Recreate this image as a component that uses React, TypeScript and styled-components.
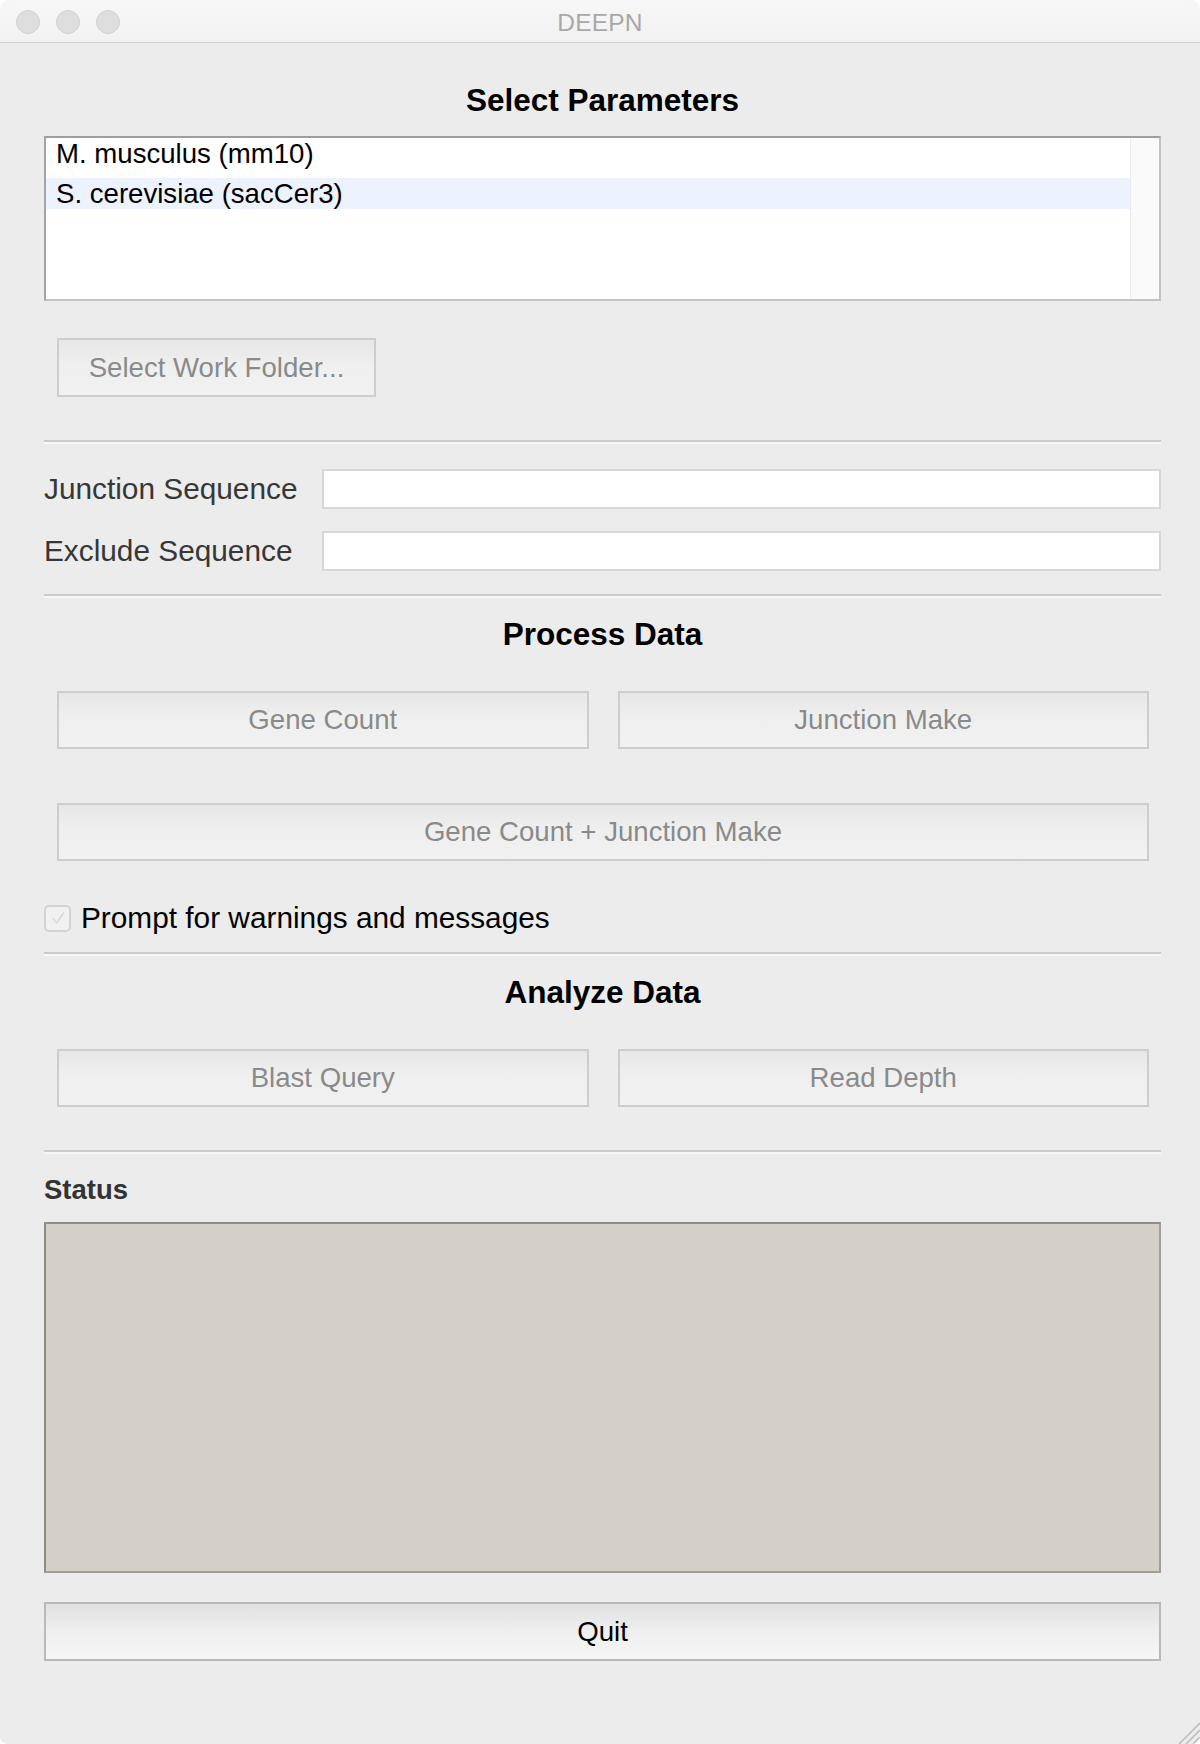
import React from "react";
import styled, { createGlobalStyle } from "styled-components";

const GlobalStyle = createGlobalStyle`
  html, body {
    margin: 0;
    padding: 0;
    background: #ffffff;
  }
  body {
    font-family: "Liberation Sans", Arial, Helvetica, sans-serif;
  }
  * {
    box-sizing: border-box;
  }
`;

const genomes = ["M. musculus (mm10)", "S. cerevisiae (sacCer3)"];

export default function App() {
  return (
    <>
      <GlobalStyle />
      <Window>
        <TitleBar>
          <Lights>
            <Light />
            <Light />
            <Light />
          </Lights>
          <WindowTitle>DEEPN</WindowTitle>
          <span />
        </TitleBar>

        <Content>
          <Heading $top={39}>Select Parameters</Heading>
          <ListBox>
            <ListItems>
              {genomes.map((g, idx) => (
                <ListItem key={g} $selected={idx === 1}>
                  {g}
                </ListItem>
              ))}
            </ListItems>
            <ScrollTrack />
          </ListBox>

          <FolderRow>
            <MacButton $width={319}>Select Work Folder...</MacButton>
          </FolderRow>

          <Separator $top={43} />

          <FieldRow $top={25}>
            <FieldLabel>Junction Sequence</FieldLabel>
            <TextInput />
          </FieldRow>
          <FieldRow $top={22}>
            <FieldLabel>Exclude Sequence</FieldLabel>
            <TextInput />
          </FieldRow>

          <Separator $top={23} />

          <Heading $top={18}>Process Data</Heading>
          <ButtonRow $top={39}>
            <MacButton>Gene Count</MacButton>
            <MacButton>Junction Make</MacButton>
          </ButtonRow>
          <ButtonRow $top={54}>
            <MacButton>Gene Count + Junction Make</MacButton>
          </ButtonRow>

          <CheckRow>
            <CheckBox>
              <svg width="22" height="22" viewBox="0 0 22 22">
                <path
                  d="M6 11.5 L9.5 16 L16.5 6"
                  fill="none"
                  stroke="#d9d9d9"
                  strokeWidth="1.6"
                  strokeLinecap="round"
                  strokeLinejoin="round"
                />
              </svg>
            </CheckBox>
            <CheckLabel>Prompt for warnings and messages</CheckLabel>
          </CheckRow>

          <Separator $top={17} />

          <Heading $top={18}>Analyze Data</Heading>
          <ButtonRow $top={39}>
            <MacButton>Blast Query</MacButton>
            <MacButton>Read Depth</MacButton>
          </ButtonRow>

          <Separator $top={43} />

          <StatusLabel>Status</StatusLabel>
          <StatusBox />

          <QuitButton>Quit</QuitButton>
        </Content>

        <ResizeGrip width="24" height="24" viewBox="0 0 24 24">
          <line x1="24" y1="3" x2="3" y2="24" stroke="#bdbdbd" strokeWidth="1.6" />
          <line x1="24" y1="10" x2="10" y2="24" stroke="#bdbdbd" strokeWidth="1.6" />
          <line x1="24" y1="17" x2="17" y2="24" stroke="#bdbdbd" strokeWidth="1.6" />
        </ResizeGrip>
      </Window>
    </>
  );
}

const Window = styled.div`
  position: relative;
  width: 1200px;
  height: 1744px;
  background: #ececec;
  border-radius: 10px 10px 8px 8px;
  overflow: hidden;
  display: flex;
  flex-direction: column;
`;

const TitleBar = styled.div`
  flex: none;
  height: 43px;
  display: grid;
  grid-template-columns: 1fr auto 1fr;
  align-items: center;
  padding: 2px 16px 0;
  background: linear-gradient(#f7f7f7, #f2f2f2);
  border-bottom: 1px solid #d0d0d0;
`;

const Lights = styled.div`
  display: flex;
  gap: 16px;
`;

const Light = styled.div`
  width: 24px;
  height: 24px;
  border-radius: 50%;
  background: #dedede;
  border: 1px solid #d0d0d0;
`;

const WindowTitle = styled.div`
  font-size: 24.5px;
  color: #a8a8a8;
  letter-spacing: 0.2px;
  padding-top: 2px;
`;

const Content = styled.div`
  display: flex;
  flex-direction: column;
  padding: 0 39px 0 44px;
`;

const Heading = styled.div<{ $top: number }>`
  margin-top: ${(p) => p.$top}px;
  height: 36px;
  line-height: 36px;
  text-align: center;
  font-size: 31.5px;
  font-weight: bold;
  color: #000;
`;

const ListBox = styled.div`
  margin-top: 18px;
  height: 165px;
  display: flex;
  background: #fff;
  border: 2px solid;
  border-color: #9e9e9e #c2c2c2 #c2c2c2 #a4a4a4;
`;

const ListItems = styled.div`
  flex: 1;
  display: flex;
  flex-direction: column;
  gap: 9px;
`;

const ListItem = styled.div<{ $selected: boolean }>`
  height: 31px;
  line-height: 31px;
  padding-left: 10px;
  font-size: 27.6px;
  color: #000;
  background: ${(p) => (p.$selected ? "#ecf3fe" : "transparent")};
`;

const ScrollTrack = styled.div`
  width: 29px;
  background: #fafafa;
  border-left: 1px solid #ebebeb;
`;

const FolderRow = styled.div`
  margin-top: 37px;
  display: flex;
  padding-left: 13px;
`;

const MacButton = styled.div<{ $width?: number }>`
  ${(p) => (p.$width ? `width: ${p.$width}px;` : "flex: 1;")}
  height: 59px;
  display: flex;
  align-items: center;
  justify-content: center;
  font-size: 27.6px;
  color: #8a8a8a;
  background: linear-gradient(#e7e7e7, #efefef 45%, #f1f1f1);
  border: 2px solid #cdcdcd;
`;

const Separator = styled.div<{ $top: number }>`
  margin-top: ${(p) => p.$top}px;
  height: 4px;
  border-top: 2px solid #cbcbcb;
  border-bottom: 2px solid #f6f6f6;
`;

const FieldRow = styled.div<{ $top: number }>`
  margin-top: ${(p) => p.$top}px;
  display: grid;
  grid-template-columns: 278px 1fr;
  align-items: center;
  height: 40px;
`;

const FieldLabel = styled.div`
  font-size: 29.8px;
  color: #373737;
  white-space: nowrap;
`;

const TextInput = styled.div`
  height: 40px;
  background: #fff;
  border: 2px solid #d7d7d7;
`;

const ButtonRow = styled.div<{ $top: number }>`
  margin-top: ${(p) => p.$top}px;
  display: flex;
  gap: 29px;
  padding: 0 12px 0 13px;
  height: 58px;

  & > div {
    height: 58px;
  }
`;

const CheckRow = styled.div`
  margin-top: 40px;
  height: 34px;
  display: flex;
  align-items: center;
  gap: 10px;
`;

const CheckBox = styled.div`
  width: 27px;
  height: 27px;
  display: flex;
  align-items: center;
  justify-content: center;
  border: 2px solid #d2d2d2;
  border-radius: 5px;
  background: #f1f1f1;
`;

const CheckLabel = styled.div`
  font-size: 29.8px;
  color: #000;
`;

const StatusLabel = styled.div`
  margin-top: 20px;
  height: 32px;
  line-height: 32px;
  font-size: 27.5px;
  font-weight: bold;
  color: #333;
`;

const StatusBox = styled.div`
  margin-top: 16px;
  height: 351px;
  background: #d4d0c8;
  border: 2px solid;
  border-color: #8e8d89 #a19f99 #a19f99 #8e8d89;
`;

const QuitButton = styled.div`
  margin-top: 29px;
  height: 59px;
  display: flex;
  align-items: center;
  justify-content: center;
  font-size: 27.6px;
  color: #000;
  background: linear-gradient(#e1e1e1, #f0f0f0 55%, #f6f6f6);
  border: 2px solid #b9b9b9;
`;

const ResizeGrip = styled.svg`
  position: absolute;
  right: 0;
  bottom: 0;
`;
